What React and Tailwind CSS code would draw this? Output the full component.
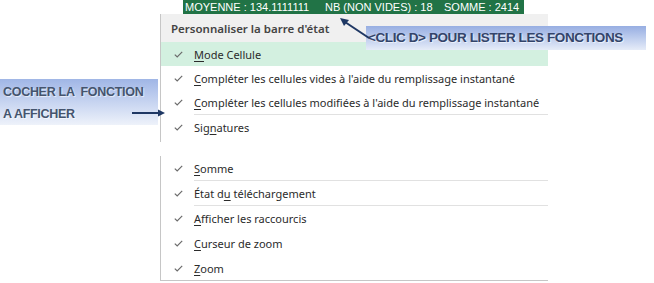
import React from "react";

const Check = () => (
  <svg width="9" height="7" viewBox="0 0 9 7" className="shrink-0">
    <path d="M0.8 3.6 L3.2 6 L8.2 0.8" fill="none" stroke="#6b6b6b" strokeWidth="1.2" />
  </svg>
);

const Row = ({ children, highlight, sep, h = "h-[24px]" }) => (
  <div className={`relative ${h} flex items-center ${highlight ? "bg-[#d3f0e0]" : ""}`}>
    <div className="w-[33px] shrink-0 flex justify-center pl-[2px]">
      <Check />
    </div>
    <span className="text-[11px] pt-[2px] text-[#2b2b2b] whitespace-nowrap">{children}</span>
    {sep && <div className="absolute left-[33px] right-0 bottom-0 h-px bg-[#e1e1e1]" />}
  </div>
);

const U = ({ children }) => <span className="underline underline-offset-2">{children}</span>;

export default function App() {
  return (
    <div className="relative w-[654px] h-[283px] bg-white overflow-hidden font-['Noto_Sans',sans-serif]">
      {/* Status bar */}
      <div className="ml-[183px] w-[341px] h-[14px] bg-[#217346] text-white text-[11px] leading-[15px] pl-[2px] whitespace-nowrap overflow-hidden flex font-['Liberation_Sans',sans-serif]">
        <span className="w-[140px] shrink-0">MOYENNE : 134.1111111</span>
        <span className="w-[119px] shrink-0">NB (NON VIDES) : 18</span>
        <span className="shrink-0">SOMME : 2414</span>
      </div>

      {/* Context menu */}
      <div className="ml-[160px] w-[388px]">
        <div className="border-l border-[#c6c6c6] pb-[2px]">
          <div className="h-[28px] bg-[#f0f0f0] flex items-center pl-[10px] pt-[1px] text-[11.5px] font-semibold text-[#444]">
            Personnaliser la barre d'état
          </div>
          <Row highlight><U>M</U>ode Cellule</Row>
          <Row><U>C</U>ompléter les cellules vides à l'aide du remplissage instantané</Row>
          <Row sep h="h-[25px]"><U>C</U>ompléter les cellules modifiées à l'aide du remplissage instantané</Row>
          <Row h="h-[25px]">Sig<U>n</U>atures</Row>
        </div>
        <div className="h-[14px]" />
        <div className="border-l border-b border-[#c6c6c6]">
          <Row sep h="h-[25px]"><U>S</U>omme</Row>
          <Row sep h="h-[25px]">État d<U>u</U> téléchargement</Row>
          <Row h="h-[25px]"><U>A</U>fficher les raccourcis</Row>
          <Row h="h-[25px]"><U>C</U>urseur de zoom</Row>
          <Row h="h-[24px]"><U>Z</U>oom</Row>
        </div>
      </div>

      {/* Callout top right */}
      <div className="absolute left-[366px] top-[26px] w-[280px] h-[24px] bg-gradient-to-b from-[#97aee2] to-[#e6ecf8] flex items-center pl-[2px]">
        <span className="text-[13.5px] font-bold tracking-[-0.4px] text-[#33446a] whitespace-nowrap font-['Liberation_Sans',sans-serif] [text-shadow:1px_1px_1px_rgba(255,255,255,0.7)]">
          &lt;CLIC D&gt; POUR LISTER LES FONCTIONS
        </span>
      </div>

      {/* Callout left */}
      <div className="absolute left-0 top-[79px] w-[158px] h-[46px] bg-gradient-to-b from-[#a0b6e6] to-[#eef2fa] pl-[3px] pt-[2px] text-[12.5px] leading-[22px] font-bold tracking-[-0.3px] text-[#44546e] font-['Liberation_Sans',sans-serif] [text-shadow:1px_1px_1px_rgba(255,255,255,0.7)]">
        <div className="whitespace-pre">COCHER LA  FONCTION</div>
        <div>A AFFICHER</div>
      </div>

      {/* Arrows */}
      <svg className="absolute left-0 top-0" width="654" height="283">
        <line x1="369" y1="38" x2="345" y2="22" stroke="#1f3864" strokeWidth="2" />
        <polygon points="340,18 349,20 344,26" fill="#1f3864" />
        <line x1="132" y1="113" x2="159" y2="113" stroke="#1f3864" strokeWidth="2" />
        <polygon points="165,113 158,109.5 158,116.5" fill="#1f3864" />
      </svg>
    </div>
  );
}
